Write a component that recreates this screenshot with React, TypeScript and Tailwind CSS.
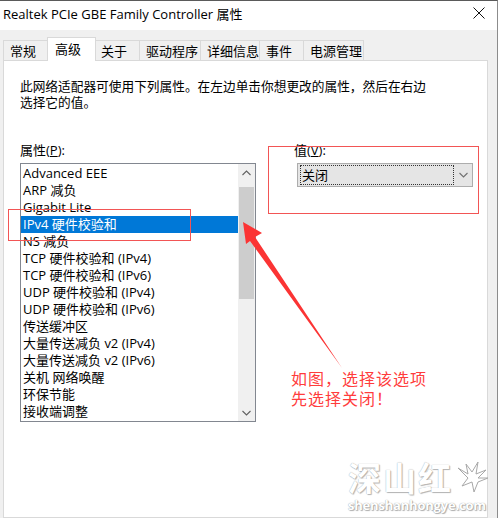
import React from "react";

const items = [
  "Advanced EEE",
  "ARP 减负",
  "Gigabit Lite",
  "IPv4 硬件校验和",
  "NS 减负",
  "TCP 硬件校验和 (IPv4)",
  "TCP 硬件校验和 (IPv6)",
  "UDP 硬件校验和 (IPv4)",
  "UDP 硬件校验和 (IPv6)",
  "传送缓冲区",
  "大量传送减负 v2 (IPv4)",
  "大量传送减负 v2 (IPv6)",
  "关机 网络唤醒",
  "环保节能",
  "接收端调整",
];

const tabs = [
  { label: "常规", w: "w-[47px]" },
  { label: "高级", w: "w-[49px]", active: true },
  { label: "关于", w: "w-[46px]" },
  { label: "驱动程序", w: "w-[62px]" },
  { label: "详细信息", w: "w-[60px]" },
  { label: "事件", w: "w-[45px]" },
  { label: "电源管理", w: "w-[61px]" },
];

function Chevron({ up, color = "#606060" }: { up?: boolean; color?: string }) {
  return (
    <svg width="9" height="6" viewBox="0 0 9 6" className="block">
      <path
        d={up ? "M0.5 5 L4.5 1 L8.5 5" : "M0.5 1 L4.5 5 L8.5 1"}
        fill="none"
        stroke={color}
        strokeWidth="1.1"
      />
    </svg>
  );
}

function Tab({ label, w, active }: { label: string; w: string; active?: boolean }) {
  if (active) {
    return (
      <div
        className={`${w} -mx-[2px] mb-[-1px] h-[24px] relative z-10 bg-white border-t border-l border-r border-[#d9d9d9] pl-[7px] pt-[2px] leading-[18px]`}
      >
        {label}
      </div>
    );
  }
  return (
    <div
      className={`${w} h-[20px] bg-[#f0f0f0] border-t border-l border-r border-[#d9d9d9] -mr-px pl-[6px] pt-px leading-[18px]`}
    >
      {label}
    </div>
  );
}

export default function App() {
  return (
    <div className="relative w-[500px] h-[518px] overflow-hidden bg-white text-[13px] text-black font-['Open_Sans','Noto_Sans_CJK_SC',sans-serif]">
      <div className="flex h-full">
        <div className="flex flex-col w-[498px] h-full border-t border-t-[#5a5a5a] border-r border-r-[#8c8c8c]">
          {/* title bar */}
          <div className="h-[29px] bg-white flex items-start justify-between pl-[3px] pr-[12px] pt-[4px]">
            <span className="leading-[18px]">Realtek PCIe GBE Family Controller 属性</span>
            <svg width="12" height="12" viewBox="0 0 12 12" className="mt-[2px]">
              <path d="M0.5 0.5 L11.5 11.5 M11.5 0.5 L0.5 11.5" stroke="#111" strokeWidth="1" />
            </svg>
          </div>

          {/* dialog body */}
          <div className="flex-1 flex flex-col bg-[#f0f0f0] pt-[7px] pl-[3px] pr-[9px]">
            <div className="flex items-end h-[23px]">
              {tabs.map((t) => (
                <Tab key={t.label} {...t} />
              ))}
            </div>

            <div className="flex-1 bg-white border border-[#d9d9d9] pl-[16px] pt-[17px]">
              <p className="text-[12.7px] leading-[16px]">
                此网络适配器可使用下列属性。在左边单击你想更改的属性，然后在右边
                <br />
                选择它的值。
              </p>

              <div className="flex mt-[32px]">
                {/* property list */}
                <div className="flex flex-col w-[236px]">
                  <div className="leading-[16px]">
                    属性(<span className="underline">P</span>):
                  </div>
                  <div className="mt-[5px] h-[259px] flex border border-[#828790] bg-white">
                    <div className="flex-1 pt-[1px] overflow-hidden">
                      {items.map((it) => (
                        <div
                          key={it}
                          className={
                            it.startsWith("IPv4")
                              ? "h-[17px] leading-[17px] pl-[2px] whitespace-nowrap bg-[#0078d7] text-white"
                              : "h-[17px] leading-[17px] pl-[2px] whitespace-nowrap"
                          }
                        >
                          {it}
                        </div>
                      ))}
                    </div>
                    <div className="w-[17px] bg-[#f0f0f0] flex flex-col items-center">
                      <div className="h-[17px] flex items-center justify-center">
                        <Chevron up />
                      </div>
                      <div className="mt-[6px] w-[15px] h-[112px] bg-[#cdcdcd]" />
                      <div className="flex-1" />
                      <div className="h-[17px] flex items-center justify-center">
                        <Chevron />
                      </div>
                    </div>
                  </div>
                </div>

                {/* value selector */}
                <div className="ml-[38px] flex flex-col">
                  <div className="leading-[16px]">
                    值(<span className="underline">V</span>):
                  </div>
                  <div className="ml-[3px] mt-[5px] w-[176px] h-[24px] bg-[#e5e5e5] border border-[#adadad] flex items-start">
                    <div className="ml-[2px] mt-[1px] w-[154px] h-[20px] border border-dotted border-[#333] pl-[1px] leading-[18px]">
                      关闭
                    </div>
                    <div className="flex-1 h-full flex items-center justify-center">
                      <Chevron color="#707070" />
                    </div>
                  </div>
                </div>
              </div>
            </div>
          </div>
        </div>
        <div className="flex-1 bg-white" />
      </div>

      {/* callout boxes */}
      <div className="absolute left-[8px] top-[209px] w-[183px] h-[32px] border border-[#f25555]" />
      <div className="absolute left-[268px] top-[146px] w-[211px] h-[68px] border border-[#f25555]" />

      {/* callout arrow */}
      <svg className="absolute left-0 top-0" width="500" height="518" viewBox="0 0 500 518">
        <polygon
          points="243,222 262,233 255,237 342,368 250,241 246,244"
          fill="#fb3434"
        />
      </svg>

      {/* callout note */}
      <div className="absolute left-[291px] top-[368px] flex flex-col text-[16px] text-[#ff3c3c] font-['Noto_Sans_CJK_SC',sans-serif] tracking-[1px]">
        <span className="h-[20px] leading-[20px]">如图，选择该选项</span>
        <span className="h-[20px] leading-[20px]">先选择关闭！</span>
      </div>

      {/* site mark */}
      <div className="absolute left-[348px] top-[458px] flex flex-col items-start text-white">
        <div className="flex items-center h-[38px] text-[33px] leading-[38px] font-bold font-['Noto_Sans_CJK_SC',sans-serif] [text-shadow:0_0_1px_#9a9a9a,1px_1px_1px_#b5b5b5] tracking-[2px]">
          深山红
          <svg width="36" height="34" viewBox="0 0 36 34" className="ml-[1px]">
            <path
              d="M4 8 L14 14 L12 4 L18 12 L24 2 L22 14 L32 10 L24 18 L34 18 L24 22 L20 32 L18 22 L8 26 L14 18 Z"
              fill="#fff"
              stroke="#a8a8a8"
              strokeWidth="1"
            />
          </svg>
        </div>
        <div className="mt-[2px] text-[13px] leading-[14px] font-bold tracking-[-0.2px] font-['Open_Sans',sans-serif] [text-shadow:0_0_1px_#8a8a8a,1px_1px_1px_#b0b0b0]">
          shenshanhongye.com
        </div>
      </div>
    </div>
  );
}
